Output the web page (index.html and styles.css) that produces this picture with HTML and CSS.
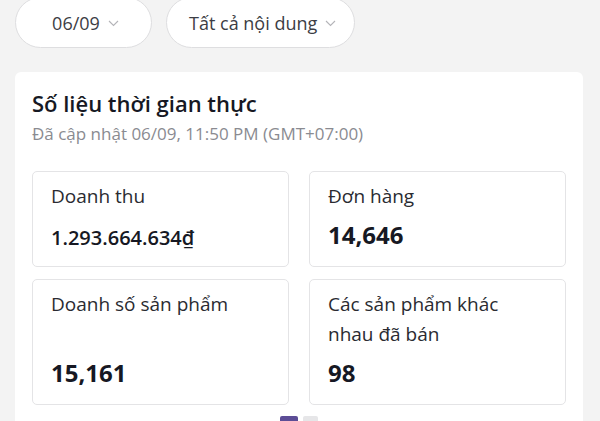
FILE: index.html
```html
<!DOCTYPE html>
<html>
<head>
    <title>Số liệu thời gian thực</title>
    <link rel="stylesheet" href="styles.css">
</head>
<body>
    <div class="filters">
        <div class="pill pill-date">
            <span>06/09</span>
            <svg class="chevron" width="11" height="7" viewBox="0 0 11 7"><polyline points="1,1 5.5,5.5 10,1" fill="none" stroke="#b4b4b8" stroke-width="1.1"/></svg>
        </div>
        <div class="pill">
            <span>Tất cả nội dung</span>
            <svg class="chevron" width="11" height="7" viewBox="0 0 11 7"><polyline points="1,1 5.5,5.5 10,1" fill="none" stroke="#b4b4b8" stroke-width="1.1"/></svg>
        </div>
    </div>

    <div class="card">
        <h2 class="card-title">Số liệu thời gian thực</h2>
        <div class="card-sub">Đã cập nhật 06/09, 11:50 PM (GMT+07:00)</div>

        <div class="stats">
            <div class="stat">
                <div class="stat-label">Doanh thu</div>
                <div class="stat-value stat-value-sm">1.293.664.634₫</div>
            </div>
            <div class="stat">
                <div class="stat-label">Đơn hàng</div>
                <div class="stat-value">14,646</div>
            </div>
            <div class="stat">
                <div class="stat-label">Doanh số sản phẩm</div>
                <div class="stat-value">15,161</div>
            </div>
            <div class="stat">
                <div class="stat-label">Các sản phẩm khác nhau đã bán</div>
                <div class="stat-value">98</div>
            </div>
        </div>

        <div class="dots">
            <span class="dot active"></span>
            <span class="dot"></span>
        </div>
    </div>
</body>
</html>
```
FILE: styles.css
```css
body {
    font-family: "Open Sans", "Liberation Sans", sans-serif;
    margin: 0;
    padding: 0 15px;
    background-color: #f3f3f3;
    color: #161823;
    overflow: hidden;
}

.filters {
    display: flex;
    gap: 14px;
    margin-top: -3px;
}

.pill {
    height: 49px;
    padding: 0 18px 0 22px;
    display: flex;
    align-items: center;
    justify-content: center;
    gap: 8px;
    background-color: #ffffff;
    border: 1px solid #dedee0;
    border-radius: 26px;
    font-size: 18px;
    color: #3c3d44;
}

.pill-date {
    min-width: 95px;
}

.chevron {
    margin-top: 2px;
}

.card {
    margin-top: 24px;
    width: 534px;
    padding: 17px 17px 0;
    background-color: #ffffff;
    border-radius: 6px;
}

.card-title {
    margin: 0;
    font-size: 22px;
    line-height: 28px;
    font-weight: 600;
}

.card-sub {
    margin-top: 6px;
    font-size: 17px;
    line-height: 22px;
    color: #8a8b91;
}

.stats {
    margin-top: 26px;
    display: grid;
    grid-template-columns: 1fr 1fr;
    gap: 12px 20px;
}

.stat {
    display: flex;
    flex-direction: column;
    justify-content: space-between;
    gap: 9px;
    padding: 9px 18px 16px;
    border: 1px solid #e4e4e6;
    border-radius: 5px;
}

.stat-label {
    font-size: 19px;
    line-height: 30px;
    color: #2a2b31;
}

.stat-value {
    font-size: 24px;
    line-height: 30px;
    font-weight: 700;
}

.stat-value-sm {
    font-size: 20px;
    line-height: 24px;
    font-weight: 600;
    padding-top: 6px;
}

.dots {
    margin-top: 11px;
    display: flex;
    justify-content: center;
    gap: 5px;
    height: 20px;
}

.dot {
    width: 15px;
    height: 8px;
    border-radius: 2px;
    background-color: #e6e6e8;
}

.dot.active {
    width: 18px;
    background-color: #5c4d96;
}
```
